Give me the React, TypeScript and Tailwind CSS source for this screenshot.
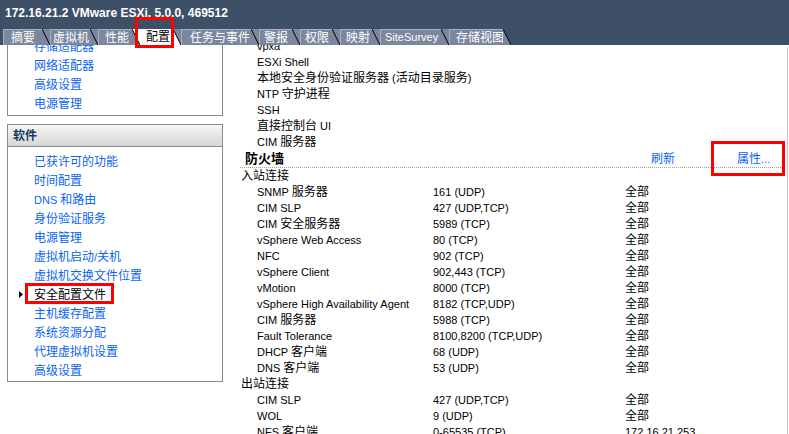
import React from "react";

function T({ s }: { s: string }) {
  const parts = s.split(/([\u2E80-\u9FFF\uFF00-\uFFEF\u3000-\u303F]+)/);
  return (
    <span>
      {parts.map((p, i) =>
        i % 2 === 1 ? (
          <span key={i} className="text-[12px]">
            {p}
          </span>
        ) : (
          <React.Fragment key={i}>{p}</React.Fragment>
        )
      )}
    </span>
  );
}

const HEADER = "#3d5068";
const TAB = "#7b879d";

const tabs = [
  { label: "摘要", cls: "w-[39px] pl-[7px]" },
  { label: "虚拟机", cls: "w-[40px] pl-[2px]" },
  { label: "性能", cls: "w-[34px] pl-[6px]" },
  { label: "配置", cls: "w-[33px] pl-[6px]", sel: true },
  { label: "任务与事件", cls: "w-[70px] pl-[8px]" },
  { label: "警报", cls: "w-[33px] pl-[4px]" },
  { label: "权限", cls: "w-[32px] pl-[4px]" },
  { label: "映射", cls: "w-[32px] pl-[5px]" },
  { label: "SiteSurvey", cls: "w-[61px] pl-[4px]", latin: true },
  { label: "存储视图", cls: "w-[54px] pl-[6px]" },
];

const hw = ["存储适配器", "网络适配器", "高级设置", "电源管理"];
const sw = [
  "已获许可的功能",
  "时间配置",
  "DNS 和路由",
  "身份验证服务",
  "电源管理",
  "虚拟机启动/关机",
  "虚拟机交换文件位置",
  "安全配置文件",
  "主机缓存配置",
  "系统资源分配",
  "代理虚拟机设置",
  "高级设置",
];

const services = [
  "vpxa",
  "ESXi Shell",
  "本地安全身份验证服务器 (活动目录服务)",
  "NTP 守护进程",
  "SSH",
  "直接控制台 UI",
  "CIM 服务器",
];

const inbound = [
  ["SNMP 服务器", "161 (UDP)", "全部"],
  ["CIM SLP", "427 (UDP,TCP)", "全部"],
  ["CIM 安全服务器", "5989 (TCP)", "全部"],
  ["vSphere Web Access", "80 (TCP)", "全部"],
  ["NFC", "902 (TCP)", "全部"],
  ["vSphere Client", "902,443 (TCP)", "全部"],
  ["vMotion", "8000 (TCP)", "全部"],
  ["vSphere High Availability Agent", "8182 (TCP,UDP)", "全部"],
  ["CIM 服务器", "5988 (TCP)", "全部"],
  ["Fault Tolerance", "8100,8200 (TCP,UDP)", "全部"],
  ["DHCP 客户端", "68 (UDP)", "全部"],
  ["DNS 客户端", "53 (UDP)", "全部"],
];
const outbound = [
  ["CIM SLP", "427 (UDP,TCP)", "全部"],
  ["WOL", "9 (UDP)", "全部"],
  ["NFS 客户端", "0-65535 (TCP)", "172.16.21.253"],
];

function Row({ r }: { r: string[] }) {
  return (
    <div className="flex h-[16px] items-center pl-[17px] leading-[16px] text-black whitespace-nowrap">
      <div className="w-[176px]">
        <T s={r[0]} />
      </div>
      <div className="w-[192px]">
        <T s={r[1]} />
      </div>
      <div>
        <T s={r[2]} />
      </div>
    </div>
  );
}

export default function App() {
  return (
    <div className="relative h-[434px] w-[789px] overflow-hidden bg-white text-[11px] [font-family:'Liberation_Sans','Noto_Sans_CJK_SC',sans-serif]">
      {/* header */}
      <div className="h-[45px] bg-[#3d5068] flex flex-col">
        <div className="h-[29px] pl-[5px] pt-[6px] text-[12px] font-bold leading-[14px] text-white whitespace-nowrap">
          172.16.21.2 VMware ESXi, 5.0.0, 469512
        </div>
        <div className="flex h-[16px] pl-[3px]">
          {tabs.map((t, i) => {
            const color = t.sel ? "#ffffff" : TAB;
            const next = tabs[i + 1];
            const nextColor = next ? (next.sel ? "#ffffff" : TAB) : HEADER;
            return (
              <div key={i} className="flex h-[16px]">
                <div
                  className={`${t.cls} flex h-[16px] items-center whitespace-nowrap ${
                    t.sel
                      ? "bg-white text-black"
                      : "bg-[#7b879d] text-white border-t border-l border-[#a6b0c1]"
                  } ${t.latin ? "text-[11px] text-[#e4eaf2]" : "text-[12px]"}`}
                >
                  {t.label}
                </div>
                <svg width="8" height="16" viewBox="0 0 8 16" className="block">
                  <polygon points="0,0 8,0 8,16" fill={nextColor} />
                  <polygon points="0,0 8,16 0,16" fill={color} />
                  <line x1="0" y1="0" x2="8" y2="16" stroke="#000" strokeWidth="1" />
                </svg>
              </div>
            );
          })}
        </div>
      </div>

      {/* body */}
      <div className="flex h-[389px] overflow-hidden">
        {/* left */}
        <div className="w-[232px] overflow-hidden pl-[7px]">
          <div className="mt-[-8px] w-[216px] border border-t-0 border-[#8a8a8a] pb-[2px]">
            {hw.map((h, i) => (
              <div key={i} className="flex h-[19px] items-center pl-[26px] text-[#0a64f0] whitespace-nowrap">
                <T s={h} />
              </div>
            ))}
          </div>
          <div className="mt-[8px] w-[216px] border border-[#8a8a8a] pb-[1px]">
            <div className="flex h-[22px] items-center border-b border-[#8a8a8a] bg-gradient-to-b from-[#f6f6f6] to-[#d6d6d6] pl-[5px] text-[12px] font-bold text-[#173a60]">
              软件
            </div>
            <div className="pt-[5px]">
              {sw.map((h, i) =>
                h === "安全配置文件" ? (
                  <div key={i} className="flex h-[19px] items-center pl-[11px] text-black whitespace-nowrap">
                    <svg width="15" height="7" viewBox="0 0 15 7" className="block">
                      <polygon points="0,0 4,3.5 0,7" fill="#000" />
                    </svg>
                    <T s={h} />
                  </div>
                ) : (
                  <div key={i} className="flex h-[19px] items-center pl-[26px] text-[#0a64f0] whitespace-nowrap">
                    <T s={h} />
                  </div>
                )
              )}
            </div>
          </div>
        </div>

        {/* right */}
        <div className="w-[555px] overflow-hidden pl-[8px] pr-[4px]">
          <div className="mt-[-7px]">
            {services.map((s, i) => (
              <div key={i} className="flex h-[16px] items-center pl-[17px] leading-[16px] text-black whitespace-nowrap">
                <T s={s} />
              </div>
            ))}
          </div>
          <div className="flex h-[18px] items-center border-b border-dotted border-[#a0a0a0] pl-[5px] whitespace-nowrap">
            <div className="w-[406px] text-[13px] font-bold text-black">防火墙</div>
            <div className="w-[86px] text-[12px] text-[#0a64f0]">刷新</div>
            <div className="text-[#0a64f0]">
              <span className="text-[12px]">属性</span>...
            </div>
          </div>
          <div className="flex h-[16px] items-center pl-[1px] text-[12px] leading-[16px] text-black">入站连接</div>
          {inbound.map((r, i) => (
            <Row key={i} r={r} />
          ))}
          <div className="flex h-[16px] items-center pl-[1px] text-[12px] leading-[16px] text-black">出站连接</div>
          {outbound.map((r, i) => (
            <Row key={i} r={r} />
          ))}
        </div>
        <div className="mt-[2px] w-px bg-[#c4c4c4]" />
        <div className="w-px bg-white" />
      </div>

      {/* red annotation boxes */}
      <div className="absolute left-[135px] top-[17px] h-[31px] w-[39px] border-[3px] border-[#ff0000]" />
      <div className="absolute left-[25px] top-[283px] h-[21px] w-[89px] border-[3px] border-[#ff0000]" />
      <div className="absolute left-[711px] top-[141px] h-[35px] w-[74px] border-[3px] border-[#ff0000]" />
    </div>
  );
}
